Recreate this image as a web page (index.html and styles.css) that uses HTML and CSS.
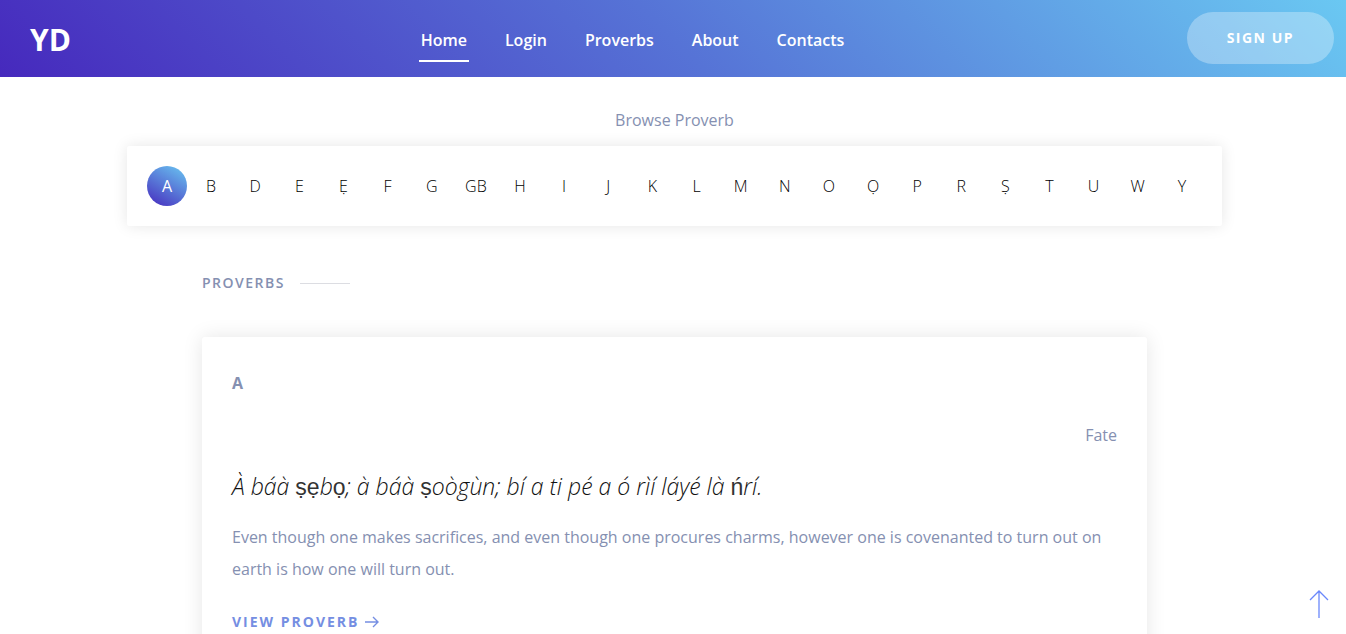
FILE: index.html
```html
<!DOCTYPE html>
<html lang="en">
<head>
<meta charset="utf-8">
<meta name="viewport" content="width=device-width, initial-scale=1">
<title>YD</title>
<link rel="stylesheet" href="styles.css">
</head>
<body>
<header class="header">
  <a class="logo" href="#">YD</a>
  <nav class="nav">
    <a class="nav-link active" href="#">Home</a>
    <a class="nav-link" href="#">Login</a>
    <a class="nav-link" href="#">Proverbs</a>
    <a class="nav-link" href="#">About</a>
    <a class="nav-link" href="#">Contacts</a>
  </nav>
  <button class="signup" type="button">Sign Up</button>
</header>
<main class="main">
  <p class="browse">Browse Proverb</p>
  <nav class="letters" aria-label="Browse by letter">
    <a class="letter current" href="#">A</a>
    <a class="letter" href="#">B</a>
    <a class="letter" href="#">D</a>
    <a class="letter" href="#">E</a>
    <a class="letter dotted" href="#">Ẹ</a>
    <a class="letter" href="#">F</a>
    <a class="letter" href="#">G</a>
    <a class="letter" href="#">GB</a>
    <a class="letter" href="#">H</a>
    <a class="letter" href="#">I</a>
    <a class="letter" href="#">J</a>
    <a class="letter" href="#">K</a>
    <a class="letter" href="#">L</a>
    <a class="letter" href="#">M</a>
    <a class="letter" href="#">N</a>
    <a class="letter" href="#">O</a>
    <a class="letter dotted" href="#">Ọ</a>
    <a class="letter" href="#">P</a>
    <a class="letter" href="#">R</a>
    <a class="letter dotted" href="#">Ṣ</a>
    <a class="letter" href="#">T</a>
    <a class="letter" href="#">U</a>
    <a class="letter" href="#">W</a>
    <a class="letter" href="#">Y</a>
  </nav>
  <section class="proverbs">
    <h2 class="section-title">Proverbs</h2>
    <article class="card">
      <p class="card-letter">A</p>
      <p class="category">Fate</p>
      <h3 class="proverb" lang="yo">À báà <span class="mark">ṣẹ</span>b<span class="mark">ọ</span>; à báà <span class="mark">ṣ</span>oògùn; bí a ti pé a ó rìí láyé là <span class="mark">ń</span>rí.</h3>
      <p class="meaning">Even though one makes sacrifices, and even though one procures charms, however one is covenanted to turn out on earth is how one will turn out.</p>
      <a class="view" href="#">View Proverb
        <svg class="arrow" viewBox="0 0 14 12" aria-hidden="true"><path d="M0 6H13M8 1L13 6L8 11"/></svg>
      </a>
    </article>
  </section>
</main>
<a class="to-top" href="#" aria-label="Back to top">
  <svg class="to-top-icon" viewBox="0 0 20 28" aria-hidden="true"><path d="M10 28V1M1 10L10 1L19 10"/></svg>
</a>
</body>
</html>
```
FILE: styles.css
```css
* { box-sizing: border-box; }
body {
  margin: 0;
  font: 400 16px/32px "Open Sans", sans-serif;
  color: #8590b1;
  background: #fff;
}
a { color: inherit; text-decoration: none; }
p, h2, h3 { margin: 0; }

.header {
  display: grid;
  grid-template-columns: 1fr auto 1fr;
  align-items: start;
  height: 77px;
  padding: 12px 12px 0 30px;
  color: #fff;
  background: linear-gradient(45deg, #4629bd, #5673d6 50%, #6ac8f2);
}
.logo { font-size: 30px; line-height: 56px; font-weight: 700; }
.nav { display: flex; gap: 34px; margin-right: 99px; }
.nav-link {
  padding: 12px 2px 4px;
  font-weight: 600;
  border-bottom: 2px solid transparent;
}
.nav-link.active { border-color: #fff; }
.signup {
  justify-self: end;
  padding: 16px 40px;
  border: 0;
  border-radius: 26px;
  font: 700 14px/20px "Open Sans", sans-serif;
  letter-spacing: 1.5px;
  text-transform: uppercase;
  color: #fff;
  background: rgba(255, 255, 255, 0.3);
}

.main { padding: 27px 0 0 3px; }
.browse { text-align: center; margin-bottom: 10px; }
.letters {
  display: flex;
  justify-content: space-between;
  max-width: 1095px;
  margin: 0 auto;
  padding: 20px;
  background: #fff;
  border-radius: 2px;
  box-shadow: 0 0 15px rgba(0, 0, 0, 0.1);
}
.letter {
  width: 40px;
  border-radius: 50%;
  font-weight: 300;
  line-height: 40px;
  text-align: center;
  color: #000;
}
.letter.current {
  font-weight: 400;
  color: #fff;
  background: linear-gradient(30deg, #4629bd, #6ac8f2);
}
.dotted { font-family: "Open Sans", "Noto Sans", sans-serif; }

.proverbs { max-width: 945px; margin: 41px auto 0; }
.section-title {
  display: flex;
  align-items: center;
  gap: 15px;
  margin-bottom: 38px;
  font-size: 14px;
  font-weight: 600;
  letter-spacing: 1.5px;
  text-transform: uppercase;
}
.section-title::after { content: ""; width: 50px; height: 1px; background: #dcdde2; }
.card {
  padding: 30px;
  background: #fff;
  border-radius: 3px;
  box-shadow: 0 0 20px rgba(0, 0, 0, 0.1);
}
.card-letter { font-weight: 700; margin-bottom: 20px; }
.category { text-align: right; margin-bottom: 20px; }
.proverb {
  margin-bottom: 19px;
  font-size: 23px;
  line-height: 30px;
  font-style: italic;
  font-weight: 300;
  color: #111;
}
.mark { font-family: "Liberation Sans", sans-serif; font-style: normal; color: #333; }
.meaning { margin-bottom: 20px; }
.view {
  display: inline-flex;
  align-items: center;
  gap: 5px;
  font-size: 14px;
  font-weight: 700;
  letter-spacing: 2px;
  text-transform: uppercase;
  color: #758ee2;
}
.arrow { width: 14px; height: 12px; fill: none; stroke: currentColor; stroke-width: 1.4; }
.to-top { position: fixed; right: 17px; bottom: 16px; line-height: 0; color: #6a88fb; }
.to-top-icon { width: 20px; height: 28px; fill: none; stroke: currentColor; stroke-width: 1.3; }
```
